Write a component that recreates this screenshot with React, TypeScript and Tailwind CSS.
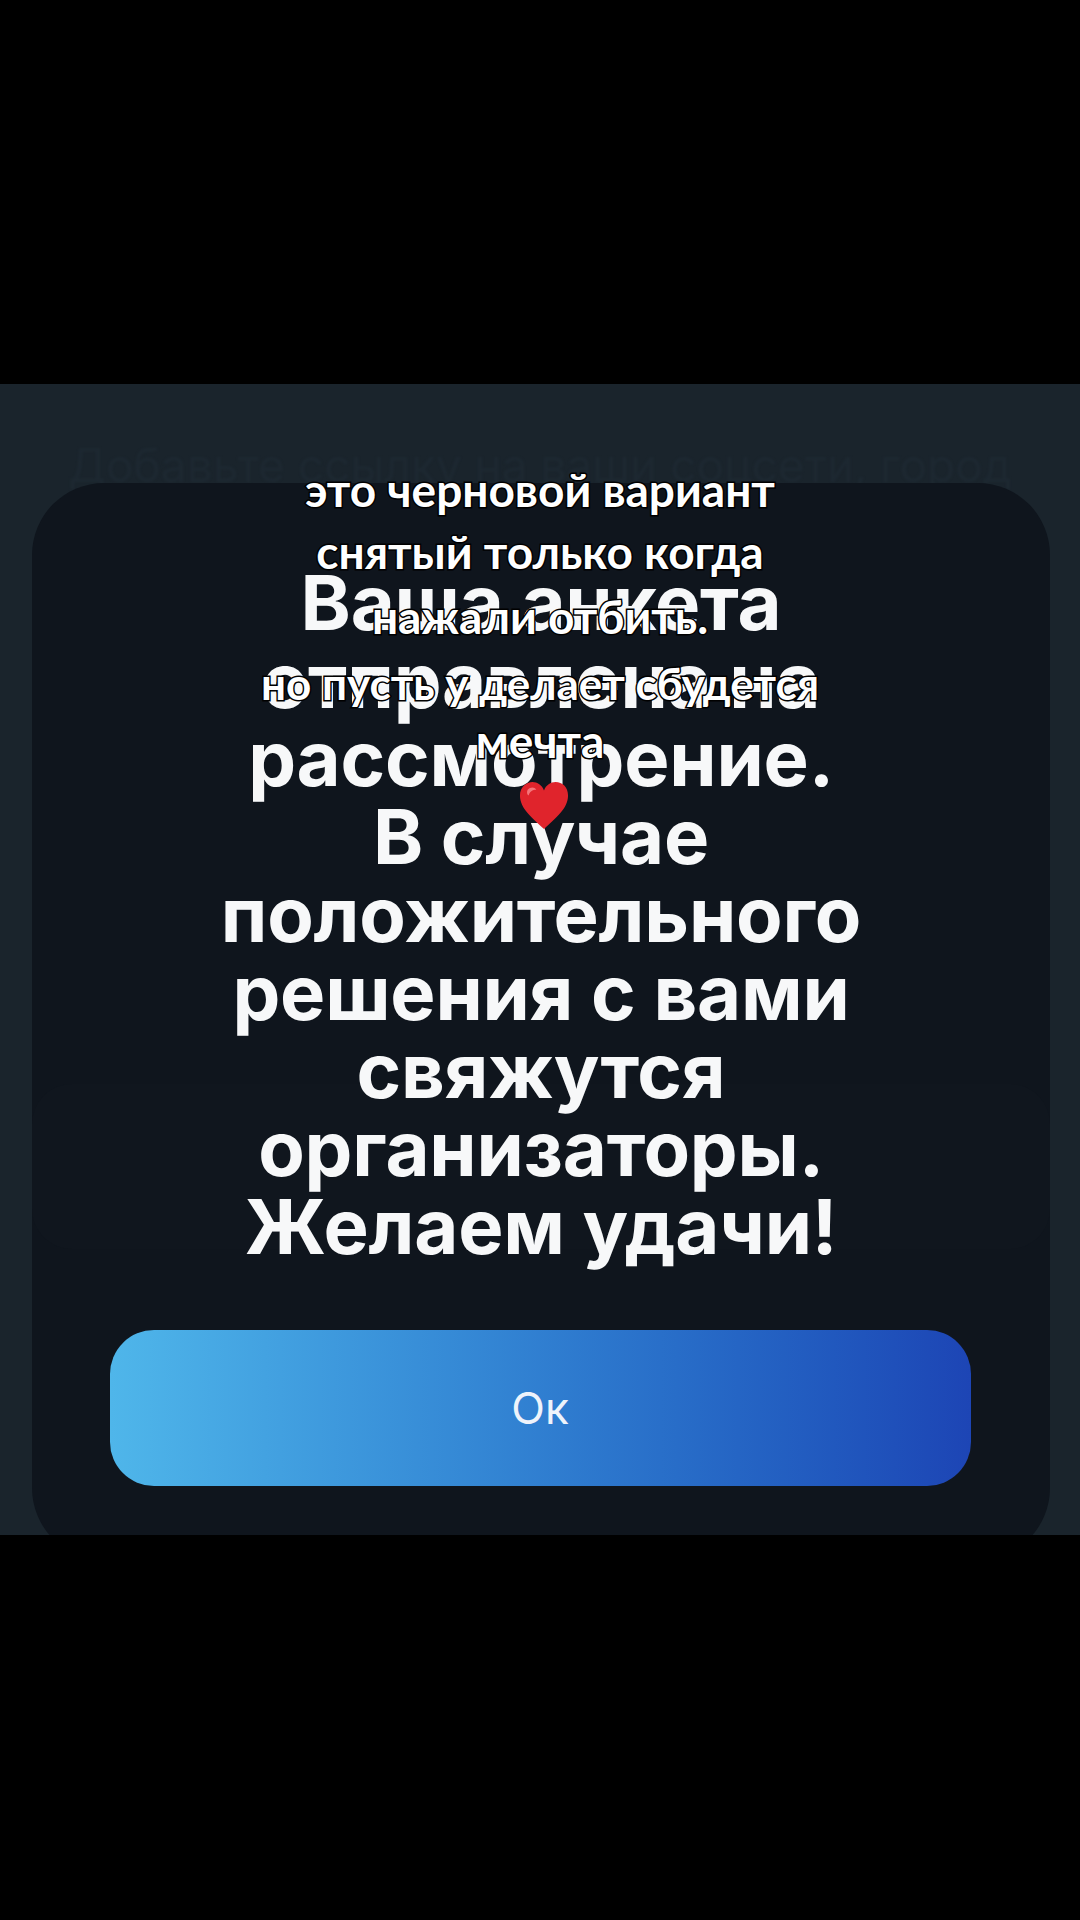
export default function App() {
  const title = ["Ваша анкета", "отправлена на", "рассмотрение.", "В случае", "положительного", "решения с вами", "свяжутся", "организаторы.", "Желаем удачи!"];
  const caption = [
    { t: "это черновой вариант", c: "h-[62px]" },
    { t: "снятый только когда", c: "h-[65px]" },
    { t: "нажали отбить.", c: "h-[66px]" },
    { t: "но пусть у делает сбудется", c: "h-[58px] text-[44px]" },
    { t: "мечта", c: "h-[71px]" },
  ];
  return (
    <div className="relative h-[1920px] w-[1080px] overflow-hidden bg-black font-['Inter',sans-serif]">
      <div className="h-[384px]" />
      <div className="h-[1151px] overflow-hidden bg-[#1a242c]">
        <div className="flex h-[99px] items-start justify-center pt-[56px] text-[46px] leading-[50px] whitespace-nowrap text-[#1d2831] blur-[1px]">
          Добавьте ссылку на ваши соцсети, город
        </div>
        <div className="relative ml-[32px] mr-[30px] flex h-[1077px] flex-col items-center rounded-[72px] bg-[#0f151d] pt-[80px]">
          <div className="absolute top-[601px] left-0 h-[165px] w-full rounded-[40px] bg-[#10161e]" />
          <div className="relative flex flex-col items-center text-center text-[76px] leading-[78px] font-bold tracking-[-0.2px] whitespace-nowrap text-[#f7f8f9] blur-[0.7px]">
            {title.map((l) => (
              <div key={l}>{l}</div>
            ))}
          </div>
          <div className="relative mt-[65px] mr-[2px] flex h-[156px] w-[861px] items-center justify-center rounded-[44px] bg-gradient-to-r from-[#4fb6ea] to-[#1d45b5] text-[44px] text-[#eef3fb]">
            Ок
          </div>
        </div>
      </div>
      <div className="absolute top-[459px] left-0 flex w-[1080px] flex-col items-center font-['Lato',sans-serif] text-[46px] leading-[62px] font-bold whitespace-nowrap text-white [-webkit-text-stroke:3px_#000] [paint-order:stroke_fill]">
        {caption.map((l) => (
          <div key={l.t} className={l.c}>
            {l.t}
          </div>
        ))}
        <svg viewBox="0 0 52 52" className="ml-[8px] h-[50px] w-[52px]">
          <path d="M26 50C14 38 1 29 1 15 1 6 8 1 14 1c5 0 10 3 12 9 2-6 7-9 12-9 7 0 13 5 13 14 0 14-13 23-25 35z" fill="#e0242c" />
          <path d="M9 9c3-3 7-3 9 0-4 0-7 2-8 6-2-1-2-4-1-6z" fill="#f4757a" />
        </svg>
      </div>
    </div>
  );
}
